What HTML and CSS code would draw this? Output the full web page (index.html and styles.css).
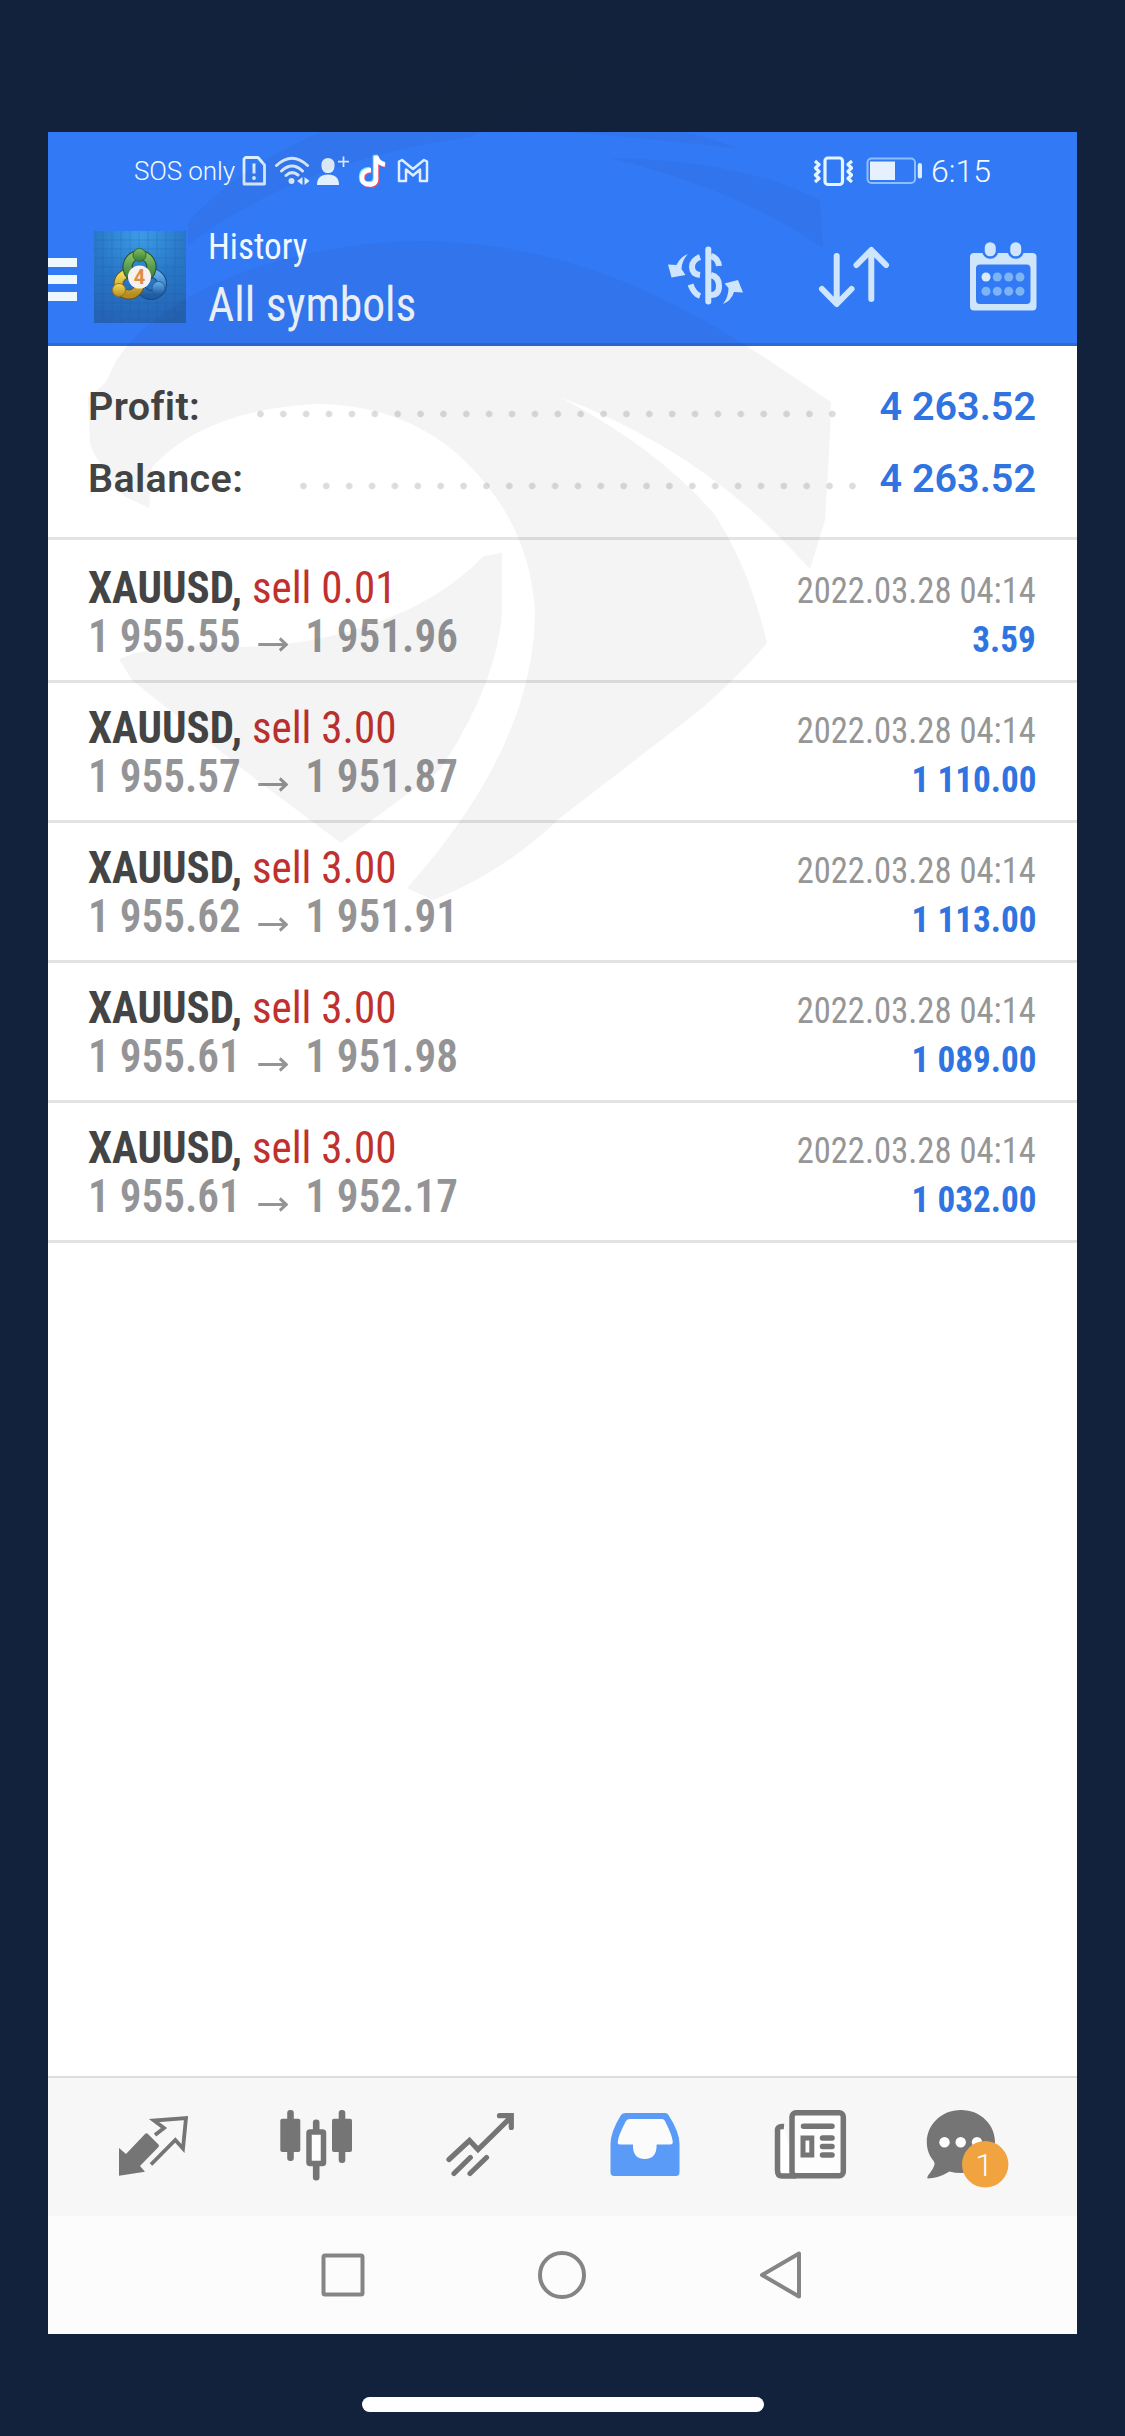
FILE: index.html
```html
<!DOCTYPE html>
<html lang="en">
<head>
<meta charset="utf-8">
<title>History</title>
<link rel="stylesheet" href="styles.css">
</head>
<body>
<div class="phone">
  <header class="header">
    <div class="status">
      <span class="carrier">SOS only</span>
      <svg class="sim" width="24" height="32" viewBox="241.5 155 24 32" fill="none" stroke="#dceeff" stroke-width="2.8" stroke-linejoin="round">
        <path d="M245 157.500H257.500L264 165V184H243.500V159Z"/><path d="M253.500 163.500V173.500" stroke-width="3"/><circle cx="253.500" cy="178" r="1.900" fill="#dceeff" stroke="none"/>
      </svg>
      <svg class="wifi" width="36" height="32" viewBox="274 155 36 32" fill="none" stroke="#dceeff" stroke-width="3" stroke-linecap="round">
        <path d="M276.500 165.500Q292 151 307.500 165.500M281.500 171Q292 161 302.500 171M286 175.500Q292 170 298 175"/><circle cx="291.500" cy="181" r="3" fill="#dceeff" stroke="none"/><path d="M302.500 177V185L297 181ZM304.500 177V185L309.500 181Z" fill="#dceeff" stroke="none"/>
      </svg>
      <svg class="person" width="33" height="32" viewBox="316 154 33 32" fill="#e3f0ff">
        <rect x="321.500" y="157" width="13" height="15" rx="6.300"/><path d="M317 184Q317 173.500 328 173.500T339 184Z"/><path d="M343.500 155.500V166M338 160.700H349" stroke="#e3f0ff" stroke-width="1.700"/>
      </svg>
      <svg class="note" width="30" height="34" viewBox="358 153.500 30 34" fill="none" stroke-width="4.500">
        <path d="M371 169.500Q362 170 362 177T369.500 184T376 176V155.500Q378 163 385 164" stroke="#ee4d72" transform="translate(1 1)"/>
        <path d="M371 169.500Q362 170 362 177T369.500 184T376 176V155.500Q378 163 385 164" stroke="#6fe9f5" transform="translate(-1 -1)"/>
        <path d="M371 169.500Q362 170 362 177T369.500 184T376 176V155.500Q378 163 385 164" stroke="#fff"/>
      </svg>
      <svg class="mail" width="32" height="26" viewBox="397 158 32 26" fill="none" stroke="#dceeff" stroke-width="2.500" stroke-linejoin="round">
        <path d="M399 161.500L402 160L413 169L424 160L427 161.500V181H420V169.500L413 175.500L406 169.500V181H399Z"/>
      </svg>
      <svg class="vibrate" width="40" height="32" viewBox="813 154 40 32" fill="none" stroke="#e3f5ff" stroke-width="3.200" stroke-linejoin="round">
        <rect x="825" y="157" width="17.500" height="26.500" rx="3"/><path d="M815 160L819 163.500L815.500 167L819 170.500L815.500 174L819 177.500L815 181M852 160L848 163.500L851.500 167L848 170.500L851.500 174L848 177.500L852 181"/>
      </svg>
      <svg class="battery" width="58" height="28" viewBox="866 157 58 28" fill="none">
        <rect x="867.500" y="158.500" width="47.500" height="24.500" rx="4" stroke="#8cc0fb" stroke-width="2"/><rect x="870" y="161.500" width="25" height="18.500" fill="#e6f0ff"/><rect x="917.800" y="163" width="4.200" height="15.500" rx="2" fill="#dceeff"/>
      </svg>
      <span class="clock">6:15</span>
    </div>
    <div class="appbar">
      <div class="burger"><i></i><i></i><i></i></div>
      <svg class="logo" width="92" height="92" viewBox="94 231 92 92">
        <defs>
          <radialGradient id="sky" cx=".5" cy=".05" r="1"><stop offset="0" stop-color="#3d9ce6"/><stop offset=".5" stop-color="#2877c6"/><stop offset="1" stop-color="#2562b4"/></radialGradient>
          <linearGradient id="green" x2="0" y2="1"><stop stop-color="#82be64"/><stop offset="1" stop-color="#367c36"/></linearGradient>
          <linearGradient id="gold" x2="0" y2="1"><stop stop-color="#f2dc58"/><stop offset="1" stop-color="#b68c22"/></linearGradient>
          <linearGradient id="azure" x2="0" y2="1"><stop stop-color="#67b1ec"/><stop offset="1" stop-color="#1f5ca6"/></linearGradient>
        </defs>
        <rect x="94" y="231" width="92" height="92" fill="url(#sky)"/>
        <path d="M94 240H186M94 249H186M94 258H186M94 267H186M94 276H186M94 285H186M94 294H186M94 303H186M94 312H186M103 231V323M112 231V323M121 231V323M130 231V323M139 231V323M148 231V323M157 231V323M166 231V323M175 231V323" stroke="#1d5ba8" stroke-width=".6" opacity=".45"/>
        <g fill="none" stroke-width="8">
          <circle cx="151" cy="284" r="11" stroke="#174a80" stroke-width="10"/><circle cx="151" cy="284" r="11" stroke="url(#azure)"/>
          <circle cx="129" cy="284" r="10.500" stroke="#655521" stroke-width="10"/><circle cx="129" cy="284" r="10.500" stroke="url(#gold)"/>
          <circle cx="139.500" cy="267" r="12" stroke="#244f30" stroke-width="10"/><circle cx="139.500" cy="267" r="12" stroke="url(#green)"/>
        </g>
        <circle cx="139.500" cy="255" r="6.500" fill="url(#green)" stroke="#2d6c34"/><circle cx="119" cy="290" r="6.500" fill="url(#gold)" stroke="#98751f"/><circle cx="158.500" cy="288" r="6.500" fill="url(#azure)" stroke="#24609c"/>
        <circle cx="139.500" cy="277" r="11.500" fill="#f6f1ee"/>
        <text x="139.500" y="284" text-anchor="middle" class="logo-num">4</text>
      </svg>
      <div class="titles"><div class="title cond">History</div><div class="subtitle cond">All symbols</div></div>
      <svg class="act-money" width="78" height="62" viewBox="667 245 78 62" fill="none" stroke="#cfe5fb" stroke-width="6">
        <path d="M708.300 249.500V301.500" stroke-linecap="round"/>
        <path d="M700 257Q692 260 692 267T700 275M700 296Q694 294 690.500 284.500M711 256Q718 258 719 266M711 275Q719 277 719 286T711 295"/>
        <path d="M688 254Q680 257 676.500 265L668 264.500L671.500 277.500L685.500 275L681.500 269Q682 260 688 254ZM723 304Q731 301 734 292L743 292.500L738 280L724.500 283.500L728.500 288Q728.500 297 723 304Z" fill="#cfe5fb" stroke="none"/>
      </svg>
      <svg class="act-sort" width="72" height="64" viewBox="818 245 72 64" fill="none" stroke="#cfe5fb" stroke-width="6" stroke-linecap="round" stroke-linejoin="round">
        <path d="M836.700 256V303M822 289L836.700 304L851.500 289M871.300 299V251M856.500 265L871.300 250L886 265"/>
      </svg>
      <svg class="act-cal" width="68" height="72" viewBox="970 240 68 72">
        <path d="M974 253H1032.500Q1036.500 253 1036.500 257V306.500Q1036.500 310.500 1032.500 310.500H974Q970 310.500 970 306.500V257Q970 253 974 253ZM980 264.500Q976 264.500 976 268.500V300Q976 304 980 304H1026.500Q1030.500 304 1030.500 300V268.500Q1030.500 264.500 1026.500 264.500Z" fill="#cfe5fb" fill-rule="evenodd"/>
        <g fill="#cfe5fb" stroke="#3279f6" stroke-width="2.500"><rect x="983.500" y="241" width="13.500" height="16.500" rx="6.500"/><rect x="1009" y="241" width="13.500" height="16.500" rx="6.500"/></g>
        <g fill="#7db4f5"><circle cx="986" cy="277" r="4.500" fill="#dcebfc"/><circle cx="997.300" cy="277" r="4.500"/><circle cx="1008.700" cy="277" r="4.500"/><circle cx="1020" cy="277" r="4.500"/><circle cx="986" cy="291.300" r="4.500"/><circle cx="997.300" cy="291.300" r="4.500"/><circle cx="1008.700" cy="291.300" r="4.500"/><circle cx="1020" cy="291.300" r="4.500"/></g>
      </svg>
    </div>
  </header>

  <section class="summary">
    <div class="sum-row"><span>Profit:</span><i class="dots dots-profit"></i><b>4 263.52</b></div>
    <div class="sum-row"><span>Balance:</span><i class="dots dots-balance"></i><b>4 263.52</b></div>
  </section>

  <main class="deals">
    <article class="deal cond">
      <div class="line"><span class="name">XAUUSD, <em>sell 0.01</em></span><time>2022.03.28 04:14</time></div>
      <div class="line"><span class="price"><span class="open">1 955.55</span><svg class="arrow" width="32" height="15" viewBox="0 0 32 15"><path d="M0 7.500H30M23 1.500L30 7.500L23 13.500"/></svg>1 951.96</span><b>3.59</b></div>
    </article>
    <article class="deal cond">
      <div class="line"><span class="name">XAUUSD, <em>sell 3.00</em></span><time>2022.03.28 04:14</time></div>
      <div class="line"><span class="price"><span class="open">1 955.57</span><svg class="arrow" width="32" height="15" viewBox="0 0 32 15"><path d="M0 7.500H30M23 1.500L30 7.500L23 13.500"/></svg>1 951.87</span><b>1 110.00</b></div>
    </article>
    <article class="deal cond">
      <div class="line"><span class="name">XAUUSD, <em>sell 3.00</em></span><time>2022.03.28 04:14</time></div>
      <div class="line"><span class="price"><span class="open">1 955.62</span><svg class="arrow" width="32" height="15" viewBox="0 0 32 15"><path d="M0 7.500H30M23 1.500L30 7.500L23 13.500"/></svg>1 951.91</span><b>1 113.00</b></div>
    </article>
    <article class="deal cond">
      <div class="line"><span class="name">XAUUSD, <em>sell 3.00</em></span><time>2022.03.28 04:14</time></div>
      <div class="line"><span class="price"><span class="open">1 955.61</span><svg class="arrow" width="32" height="15" viewBox="0 0 32 15"><path d="M0 7.500H30M23 1.500L30 7.500L23 13.500"/></svg>1 951.98</span><b>1 089.00</b></div>
    </article>
    <article class="deal cond">
      <div class="line"><span class="name">XAUUSD, <em>sell 3.00</em></span><time>2022.03.28 04:14</time></div>
      <div class="line"><span class="price"><span class="open">1 955.61</span><svg class="arrow" width="32" height="15" viewBox="0 0 32 15"><path d="M0 7.500H30M23 1.500L30 7.500L23 13.500"/></svg>1 952.17</span><b>1 032.00</b></div>
    </article>
  </main>

  <nav class="tabs">
    <svg viewBox="70 2078 164 138"><path d="M119 2148L126 2154L145 2134Q146.500 2132.500 148 2134L158.500 2144.500Q159.500 2146 158.500 2147L140 2166L145 2171.700L119 2175.700Z" fill="#757575"/><path d="M155 2135L164 2128L154 2120.500L186 2118L183 2148.500L175.300 2140L151 2164.500" fill="none" stroke="#757575" stroke-width="3.800"/></svg>
    <svg viewBox="234 2078 164 138"><g fill="#757575"><rect x="280.300" y="2118.700" width="20" height="33.300" rx="2"/><rect x="287.200" y="2110" width="6.600" height="51" rx="3"/><rect x="332" y="2118.700" width="20" height="33.300" rx="2"/><rect x="338.700" y="2110" width="6.600" height="53" rx="3"/><rect x="312.900" y="2119.500" width="6.600" height="61" rx="3"/></g><rect x="309" y="2132" width="14.500" height="31.500" rx="1" fill="#fdfdfd" stroke="#757575" stroke-width="5.500"/></svg>
    <svg viewBox="398 2078 164 138" fill="none" stroke="#757575" stroke-width="5.200" stroke-linecap="round"><path d="M449 2159.500L469.500 2140.500L478 2149.500L511 2117M499.500 2115.700H511.300V2127.500M470.300 2157.500L454 2173.500M486.500 2157.500L470 2173.500"/></svg>
    <svg viewBox="562 2078 164 138"><path d="M625.500 2113H665Q667 2113 668.500 2115Q679.500 2132 679.500 2144V2172Q679.500 2176 676 2176H614Q610.500 2176 610.500 2172V2144Q610.500 2132 621 2115Q622.500 2113 625.500 2113Z" fill="#5a9bf8"/><path d="M630 2119H662Q664 2119 665 2121Q672.500 2136 672.800 2142Q672.800 2144.500 670 2144.500H656.600Q657 2159 644.700 2159T633 2144.500H620Q617.500 2144.500 617.700 2142Q618 2136 626 2121Q627 2119 630 2119Z" fill="#fbfbfc"/></svg>
    <svg viewBox="726 2078 164 138" fill="none" stroke="#757575" stroke-width="5.500"><path d="M784 2126.500Q777.500 2126 777.500 2130V2170.500Q777.500 2176 782 2176H796" fill="#fff"/><rect x="792" y="2112.800" width="51.300" height="63" rx="4" fill="#fdfdfd"/><path d="M803.500 2126.200H832M822.500 2138H832M822.500 2146.500H832M822.500 2155H832" stroke-linecap="round"/><rect x="803" y="2138" width="8.800" height="17" stroke-width="5"/></svg>
    <svg viewBox="890 2078 164 138"><path d="M961 2110C981 2110 995 2125 995 2142C995 2160 979 2173 961 2173Q955 2173 949.500 2171.500Q938 2178.500 927.500 2178.500Q926.500 2177 930 2173Q936 2165 934 2161.500C929 2156 926.800 2149 926.800 2142C926.800 2125 941 2110 961 2110Z" fill="#757575"/><g fill="#fff"><circle cx="944.500" cy="2142.300" r="5.200"/><circle cx="960.700" cy="2142.300" r="5.200"/><circle cx="977" cy="2142.300" r="5.200"/></g><circle cx="985.200" cy="2164.300" r="23.200" fill="#f0a33e"/><text x="984" y="2175.700" text-anchor="middle" class="badge">1</text></svg>
  </nav>
  <div class="sysnav">
    <svg width="44" height="50" viewBox="320.500 2250 44 50"><rect x="323" y="2255.500" width="39" height="39" rx="1.500"/></svg>
    <svg width="50" height="50" viewBox="537.500 2250 50 50"><circle cx="562.500" cy="2275" r="22"/></svg>
    <svg width="44" height="50" viewBox="759 2250 44 50"><path d="M799 2253.500V2296.500L762 2275Z" stroke-linejoin="round"/></svg>
  </div>
</div>
<div class="home"></div>
<svg class="watermark" width="1125" height="1000" viewBox="0 0 1125 1000">
  <path d="M600 50Q430 75 330 128Q240 165 188 222V245Q300 160 470 137Q520 115 560 90Q570 65 600 50Z"/>
  <path d="M500 128Q620 105 740 149Q630 135 500 128Z"/>
  <path d="M610 158Q740 160 820 200L823 248Q740 190 610 158Z"/>
  <path d="M126 347C190 275 310 243 420 241C560 243 660 290 764 357L831 402L830 435L825 520L810 569L795 553Q700 450 560 397Q660 450 715 515Q750 570 767 643Q740 675 700 710L560 818Q500 875 433 900L407 888Q535 745 535 610Q530 540 489 488Q425 404 315 404Q205 410 152 467L149 508L124 496Q95 460 90 443L88 398L106 382L116 361Z"/>
  <path d="M502 553V610Q499 680 440 770L341 843L254 778L132 680L119 659Q170 640 244 647Q330 645 407 610Q450 590 484 556Z"/>
</svg>
</body>
</html>
```
FILE: styles.css
```css
* { box-sizing: border-box; }
body {
  margin: 0;
  width: 1125px;
  height: 2436px;
  padding-top: 132px;
  background: #12223d;
  font-family: Roboto, "Liberation Sans", sans-serif;
  position: relative;
  overflow: hidden;
}
svg { display: block; flex: none; }
.cond { font-family: "Roboto Condensed", Roboto, sans-serif; font-stretch: 75%; }
.phone {
  width: 1029px;
  height: 2202px;
  margin-left: 48px;
  background: #fff;
  display: flex;
  flex-direction: column;
}

/* Header */
.header { height: 214px; background: #3279f6; border-bottom: 3px solid #2d69d3; color: #f3f9ff; }
.status { display: flex; align-items: center; height: 78px; padding: 0 86px; }
.carrier { width: 108px; font-size: 26px; font-weight: 350; white-space: nowrap; letter-spacing: -.1px; }
.wifi { margin-left: 8px; }
.person { margin-left: 6px; }
.note { margin-left: 9px; }
.mail { margin-left: 9px; }
.vibrate { margin-left: auto; }
.battery { margin-left: 13px; }
.clock { margin-left: 7px; font-size: 32px; line-height: 32px; font-weight: 350; width: 60px; white-space: nowrap; }
.appbar { display: flex; align-items: flex-start; height: 133px; padding-right: 39px; }
.burger { display: flex; flex-direction: column; gap: 8.500px; width: 29px; margin: 48px 17px 0 0; }
.burger i { height: 8.500px; background: #eef8ff; }
.logo { margin-top: 21px; }
.logo-num { font: bold 20px Roboto, sans-serif; fill: #e08c42; }
.titles { margin-left: 22px; padding-top: 16px; white-space: nowrap; }
.title { font-size: 36.500px; line-height: 42px; transform: scaleX(.965); transform-origin: left; }
.subtitle { font-size: 49px; line-height: 62px; margin-top: 6px; transform: scaleX(.93); transform-origin: left; }
.act-money { margin: 35px 73px 0 auto; }
.act-sort { margin: 35px 80px 0 0; }
.act-cal { margin-top: 30px; }

/* Totals */
.summary { height: 194px; padding: 24px 41px 0; border-bottom: 3px solid #e3e3e3; }
.sum-row { display: flex; height: 72px; line-height: 73px; font-size: 39.500px; font-weight: 650; color: #444; white-space: nowrap; }
.sum-row span { margin-left: -1px; letter-spacing: .35px; }
.sum-row b { font-weight: 650; color: #2f74e0; }
.dots {
  height: 8px;
  margin-top: 40px;
  margin-left: auto;
  background: radial-gradient(circle, #dcdcdc 2.800px, transparent 3.800px) 0 0 / 22.880px 8px repeat-x;
}
.dots-profit { width: 594.880px; margin-right: 36px; }
.dots-balance { width: 572px; margin-right: 16px; }

/* Closed deals */
.deal { height: 140px; padding: 20px 41px 0 40px; border-bottom: 3px solid #e3e3e3; white-space: nowrap; }
.deal:first-child { height: 143px; padding-top: 23px; }
.line { display: flex; justify-content: space-between; align-items: baseline; height: 49px; line-height: 49px; }
.name { font-size: 45px; font-weight: 700; color: #444; transform: scaleX(.956); transform-origin: left; }
.name em { font-style: normal; font-weight: 400; color: #c0302e; }
.line time { font-size: 37px; line-height: 40px; color: #969696; transform: scaleX(.935); transform-origin: right; }
.line b { font-size: 37px; line-height: 40px; font-weight: 700; color: #2f74e0; transform: scaleX(.95); transform-origin: right; }
.price { display: flex; align-items: baseline; font-size: 46px; font-weight: 600; color: #949496; transform: scaleX(.94); transform-origin: left; }
.open { width: 181px; }
.arrow { margin-right: 18px; fill: none; stroke: #949496; stroke-width: 3px; }

/* Bottom bars */
.tabs { margin-top: auto; flex: none; display: grid; grid-template-columns: repeat(6, 164px); padding-left: 22px; height: 140px; border-top: 2px solid #dedede; background: #f7f7f7; }
.tabs svg { width: 164px; height: 138px; }
.badge { font: 300 32px Roboto, sans-serif; fill: #fff; stroke: none; }
.sysnav { flex: none; display: flex; justify-content: space-between; align-items: center; height: 118px; padding: 0 274px 0 272.500px; background: #fcfcfc; }
.sysnav svg { fill: none; stroke: #858585; stroke-width: 4px; }

.home { width: 402px; height: 15px; margin: 63px auto 0; border-radius: 8px; background: #fff; }
.watermark { position: absolute; left: 0; top: 0; fill: #222; opacity: .043; }
```
